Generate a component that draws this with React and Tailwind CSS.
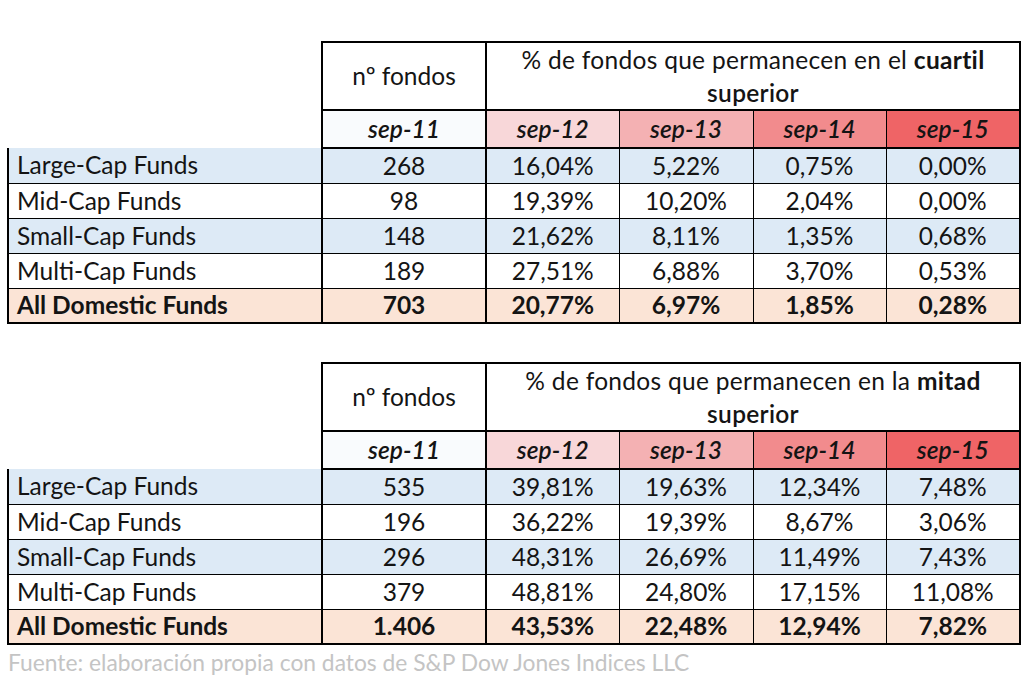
import React from "react";

const sepHeads = [
  { label: "sep-11", bg: "bg-[#f9fbfd]" },
  { label: "sep-12", bg: "bg-[#f8d7d9]" },
  { label: "sep-13", bg: "bg-[#f4b1b3]" },
  { label: "sep-14", bg: "bg-[#f28b8d]" },
  { label: "sep-15", bg: "bg-[#ef6466]" },
];

const tables = [
  {
    metric: "en el",
    word: "cuartil",
    rows: [
      ["Large-Cap Funds", "268", "16,04%", "5,22%", "0,75%", "0,00%"],
      ["Mid-Cap Funds", "98", "19,39%", "10,20%", "2,04%", "0,00%"],
      ["Small-Cap Funds", "148", "21,62%", "8,11%", "1,35%", "0,68%"],
      ["Multi-Cap Funds", "189", "27,51%", "6,88%", "3,70%", "0,53%"],
    ],
    total: ["All Domestic Funds", "703", "20,77%", "6,97%", "1,85%", "0,28%"],
  },
  {
    metric: "en la",
    word: "mitad",
    rows: [
      ["Large-Cap Funds", "535", "39,81%", "19,63%", "12,34%", "7,48%"],
      ["Mid-Cap Funds", "196", "36,22%", "19,39%", "8,67%", "3,06%"],
      ["Small-Cap Funds", "296", "48,31%", "26,69%", "11,49%", "7,43%"],
      ["Multi-Cap Funds", "379", "48,81%", "24,80%", "17,15%", "11,08%"],
    ],
    total: ["All Domestic Funds", "1.406", "43,53%", "22,48%", "12,94%", "7,82%"],
  },
];

// thick lines sit left of the first three columns, thin ones between the later columns
const sideBorder = (i) => (i < 3 ? "border-l-2" : "border-l");

const DataRow = ({ cells, bg, bold, last }) => (
  <tr className={`h-[35px] ${bg} ${bold ? "font-bold" : ""}`}>
    {cells.map((c, i) => (
      <td
        key={i}
        className={`${sideBorder(i)} ${i === 5 ? "border-r-2" : ""} ${
          last ? "border-b-2" : "border-b"
        } border-black p-0 leading-[26px] ${i === 0 ? "text-left pl-[8px]" : "text-center"}`}
      >
        {c}
      </td>
    ))}
  </tr>
);

const FundTable = ({ metric, word, rows, total }) => (
  <table className="table-fixed border-collapse w-[1012px]">
    <colgroup>
      <col className="w-[314px]" />
      <col className="w-[164px]" />
      <col className="w-[133px]" />
      <col className="w-[134px]" />
      <col className="w-[133px]" />
      <col className="w-[134px]" />
    </colgroup>
    <thead>
      <tr className="h-[68px]">
        <th className="p-0" />
        <th className="border-2 border-black font-normal p-0 text-center">nº fondos</th>
        <th colSpan={5} className="border-2 border-black font-normal p-0 text-center leading-[33px] tracking-[0.3px]">
          % de fondos que permanecen {metric} <span className="font-bold">{word}</span>
          <br />
          <span className="font-semibold">superior</span>
        </th>
      </tr>
      <tr className="h-[38px]">
        <th className="p-0" />
        {sepHeads.map((h, i) => (
          <th
            key={h.label}
            className={`${h.bg} border-black border-t-2 border-b-2 ${
              i < 2 ? "border-l-2" : "border-l"
            } ${i === 4 ? "border-r-2" : ""} p-0 leading-[28px] text-center italic font-semibold`}
          >
            {h.label}
          </th>
        ))}
      </tr>
    </thead>
    <tbody>
      {rows.map((r, i) => (
        <DataRow key={r[0]} cells={r} bg={i % 2 === 0 ? "bg-[#ddeaf6]" : "bg-white"} />
      ))}
      <DataRow cells={total} bg="bg-[#fbe4d6]" bold last />
    </tbody>
  </table>
);

export default function App() {
  return (
    <div className="w-[1030px] h-[697px] bg-white pl-[7px] pt-[41px] text-[24.5px] text-[#141414] font-['Lato',sans-serif] overflow-hidden">
      <div className="flex flex-col gap-[38px]">
        {tables.map((t) => (
          <FundTable key={t.word} {...t} />
        ))}
      </div>
      <p className="mt-[3px] pl-[1px] text-[22.8px] text-[#c4c4c4] leading-[28px]">
        Fuente: elaboración propia con datos de S&amp;P Dow Jones Indices LLC
      </p>
    </div>
  );
}
